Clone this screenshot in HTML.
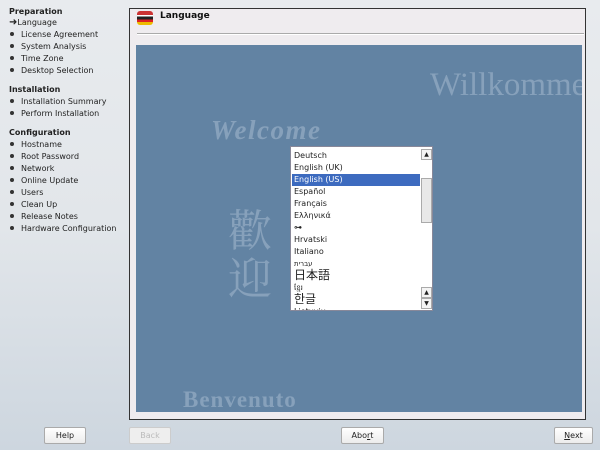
<!DOCTYPE html>
<html><head><meta charset="utf-8"><style>
*{margin:0;padding:0;box-sizing:border-box}
body{width:600px;height:450px;overflow:hidden;position:relative;font-family:"DejaVu Sans","Liberation Sans",sans-serif;font-size:8px;color:#222;background:linear-gradient(180deg,#e8ebee 0%,#e2e6ea 50%,#cdd6df 100%)}
.a{position:absolute;white-space:nowrap}
.h{font-weight:bold;font-size:8px}
.it{font-size:8px}
.dot{display:inline-block;width:4px;height:4px;border-radius:50%;background:#333;margin:0 7px 1px 10px;vertical-align:middle}
.frame{left:129px;top:8px;width:457px;height:412px;border:1px solid #333;background:#efecef}
.blue{left:136px;top:45px;width:446px;height:367px;background:#6283a3;overflow:hidden}
.bg{position:absolute;color:#87a1bb;font-family:"Liberation Serif",serif;white-space:nowrap}
.list{left:290px;top:146px;width:143px;height:165px;background:#fff;border:1px solid #889;overflow:hidden}
.row{position:absolute;left:1px;width:128px;height:12px;line-height:12px;padding-left:2px;font-size:8px}
.btn{position:absolute;top:427px;height:17px;border:1px solid #aaa;background:linear-gradient(#fff,#ececec);border-radius:2px;font-size:8px;text-align:center;line-height:15px}
.sb{position:absolute;left:130px;width:11px;border:1px solid #aaa;background:#f4f4f4;font-size:6px;text-align:center;line-height:9px}
</style></head><body>
<div class="a h" style="left:9px;top:7px">Preparation</div>
<div class="a it" style="left:9px;top:18px"><span style="font-size:10px;line-height:8px">➜</span>Language</div>
<div class="a it" style="left:0;top:30px"><span class="dot"></span>License Agreement</div>
<div class="a it" style="left:0;top:42px"><span class="dot"></span>System Analysis</div>
<div class="a it" style="left:0;top:54px"><span class="dot"></span>Time Zone</div>
<div class="a it" style="left:0;top:66px"><span class="dot"></span>Desktop Selection</div>
<div class="a h" style="left:9px;top:85px">Installation</div>
<div class="a it" style="left:0;top:97px"><span class="dot"></span>Installation Summary</div>
<div class="a it" style="left:0;top:109px"><span class="dot"></span>Perform Installation</div>
<div class="a h" style="left:9px;top:128px">Configuration</div>
<div class="a it" style="left:0;top:140px"><span class="dot"></span>Hostname</div>
<div class="a it" style="left:0;top:152px"><span class="dot"></span>Root Password</div>
<div class="a it" style="left:0;top:164px"><span class="dot"></span>Network</div>
<div class="a it" style="left:0;top:176px"><span class="dot"></span>Online Update</div>
<div class="a it" style="left:0;top:188px"><span class="dot"></span>Users</div>
<div class="a it" style="left:0;top:200px"><span class="dot"></span>Clean Up</div>
<div class="a it" style="left:0;top:212px"><span class="dot"></span>Release Notes</div>
<div class="a it" style="left:0;top:224px"><span class="dot"></span>Hardware Configuration</div>

<div class="a frame"></div>
<div class="a" style="left:137px;top:11px;width:16px;height:14px;background:linear-gradient(180deg,#c33 0,#c33 30%,#fff 30%,#fff 40%,#222 40%,#222 60%,#d22 60%,#d22 80%,#eb0 80%);border-radius:3px"></div>
<div class="a h" style="left:160px;top:11px;font-size:9px;color:#111">Language</div>
<div class="a" style="left:137px;top:33px;width:447px;height:2px;background:#aaa;border-bottom:1px solid #fff"></div>
<div class="a blue">
 <div class="bg" style="left:294px;top:22px;font-size:33px">Willkomme</div>
 <div class="bg" style="left:75px;top:70px;font-size:27px;font-weight:bold;font-style:italic;letter-spacing:1.5px">Welcome</div>
 <div class="bg" style="left:92px;top:158px;font-size:44px;line-height:48px;font-family:'Noto Serif CJK SC',serif">歡<br>迎</div>
 <div class="bg" style="left:47px;top:342px;font-size:23px;font-weight:bold;letter-spacing:1px">Benvenuto</div>
</div>
<div class="a list">
 <div class="row" style="top:3px">Deutsch</div>
 <div class="row" style="top:15px">English (UK)</div>
 <div class="row" style="top:27px;background:#3d6bbf;color:#fff">English (US)</div>
 <div class="row" style="top:39px">Español</div>
 <div class="row" style="top:51px">Français</div>
 <div class="row" style="top:63px">Ελληνικά</div>
 <div class="row" style="top:75px;font-weight:bold">⊶</div>
 <div class="row" style="top:87px">Hrvatski</div>
 <div class="row" style="top:99px">Italiano</div>
 <div class="row" style="top:111px;font-size:7px">עברית</div>
 <div class="row" style="top:121px;font-size:12px;line-height:14px;font-family:'Noto Sans CJK JP',sans-serif">日本語</div>
 <div class="row" style="top:135px;font-size:7px">ខ្មែរ</div>
 <div class="row" style="top:145px;font-size:12px;line-height:14px;font-family:'Noto Sans CJK KR',sans-serif">한글</div>
 <div class="row" style="top:159px">Lietuvių</div>
 <div class="sb" style="top:2px;height:11px">▲</div>
 <div class="sb" style="top:31px;height:45px;background:#e8e8e8"></div>
 <div class="sb" style="top:140px;height:11px">▲</div>
 <div class="sb" style="top:151px;height:11px">▼</div>
</div>

<div class="btn" style="left:44px;width:42px">Help</div>
<div class="btn" style="left:129px;width:42px;color:#bbb;background:#eee;border-color:#ccc">Back</div>
<div class="btn" style="left:341px;width:43px">Abo<u>r</u>t</div>
<div class="btn" style="left:554px;width:39px"><u>N</u>ext</div>
</body></html>
